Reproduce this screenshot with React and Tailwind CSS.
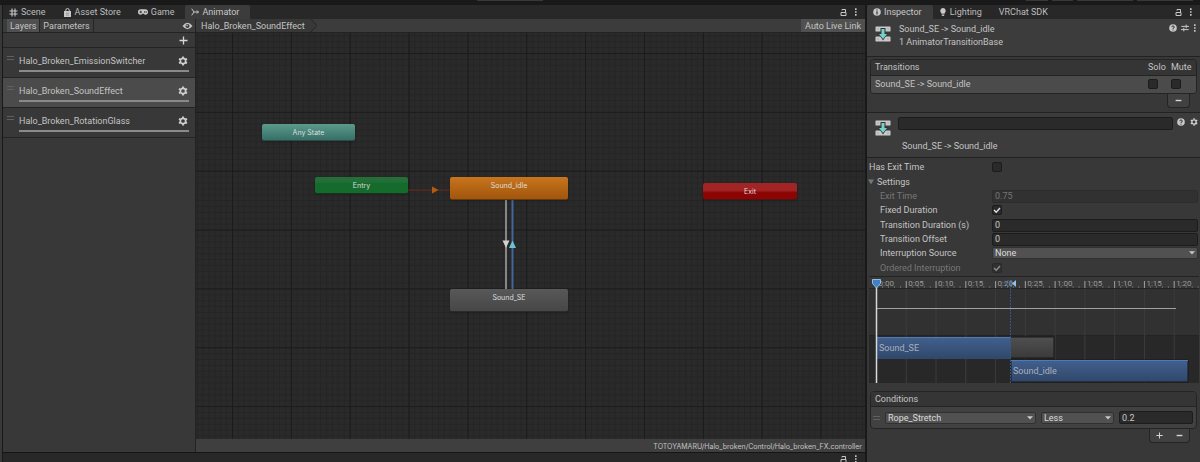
import React, { useState } from 'react';

const LAYERS = ['Halo_Broken_EmissionSwitcher', 'Halo_Broken_SoundEffect', 'Halo_Broken_RotationGlass'];

const TICKS = ['0:00', '0:05', '0:10', '0:15', '0:20', '0:25', '1:00', '1:05', '1:10', '1:15', '1:20'];
const TICK_GAP = 29.77;

// ==========================================
// Icons
// ==========================================
const HashIcon = () => (
    <svg className="size-[9px]" viewBox="0 0 9 9" stroke="#c8c8c8" strokeWidth="1.1" fill="none">
        <path d="M3 0.5V8.5M6 0.5V8.5M0.5 3H8.5M0.5 6H8.5" />
    </svg>
);

const BagIcon = () => (
    <svg className="size-[9px]" viewBox="0 0 9 9">
        <path d="M1 3H8V9H1Z" fill="#c8c8c8" />
        <path d="M2.8 4V2.2A1.7 1.7 0 0 1 6.2 2.2V4" fill="none" stroke="#c8c8c8" strokeWidth="1" />
        <path d="M3 5.2H6M3 7H6" stroke="#777" strokeWidth="0.6" />
    </svg>
);

const GamepadIcon = () => (
    <svg className="h-[8px] w-[10px]" viewBox="0 0 11 8">
        <path d="M3 1H8A3 3 0 0 1 8 7Q7 7 6.4 6H4.6Q4 7 3 7A3 3 0 0 1 3 1Z" fill="#c8c8c8" />
        <path d="M1.6 4H4.4M3 2.6V5.4" stroke="#282828" strokeWidth="0.9" />
        <circle cx="7.2" cy="4" r="0.7" fill="#282828" />
        <circle cx="9" cy="4" r="0.7" fill="#282828" />
    </svg>
);

const AnimatorIcon = () => (
    <svg className="size-[8px]" viewBox="0 0 8 8" fill="none" stroke="#c8c8c8" strokeWidth="1">
        <path d="M0.7 0.7L3 4L0.7 7.3M3 4H7.6M5.8 2.4L7.4 4L5.8 5.6" />
    </svg>
);

const InfoIcon = () => (
    <svg className="size-[8px]" viewBox="0 0 8 8">
        <circle cx="4" cy="4" r="3.8" fill="#c8c8c8" />
        <path d="M4 1.4V2.5M4 3.3V6.5" stroke="#333" strokeWidth="1.2" />
    </svg>
);

const BulbIcon = () => (
    <svg className="size-[8px]" viewBox="0 0 8 8" fill="#c8c8c8">
        <path d="M4 0A2.9 2.9 0 0 1 5.6 5.2V5.8H2.4V5.2A2.9 2.9 0 0 1 4 0Z" />
        <path d="M2.6 6.4H5.4V7.2L4.6 8H3.4L2.6 7.2Z" />
    </svg>
);

const LockIcon = () => (
    <svg className="h-[8px] w-[7px]" viewBox="0 0 7 8" fill="none" stroke="#c8c8c8" strokeWidth="1">
        <path d="M1 4.500H6V7.500H1ZM5.500 4V1.500H2V2.500" />
    </svg>
);

const DotsIcon = () => (
    <svg className="h-[8px] w-[4px]" viewBox="0 0 4 8" fill="#c8c8c8">
        <path d="M1 0.3H2.6V1.9H1ZM1 3.2H2.6V4.8H1ZM1 6.1H2.6V7.7H1Z" />
    </svg>
);

const EyeIcon = () => (
    <svg className="h-[8px] w-[11px]" viewBox="0 0 11 8">
        <path d="M0.5 4Q5.5 -2.4 10.5 4Q5.5 10.4 0.5 4Z" fill="#c4c4c4" />
        <circle cx="5.5" cy="4" r="2" fill="#3c3c3c" />
        <circle cx="5.1" cy="3.5" r="0.8" fill="#c4c4c4" />
    </svg>
);

const GearIcon = ({ className }) => (
    <svg className={className} viewBox="0 0 10 10" fill="none" stroke="#d0d0d0">
        <circle cx="5" cy="5" r="2.7" strokeWidth="1.7" />
        <path d="M5 0.4V2M5 8V9.6M1 2.7L2.4 3.5M7.6 6.5L9 7.3M1 7.3L2.4 6.5M7.6 3.5L9 2.7" strokeWidth="1.8" />
    </svg>
);

const HelpIcon = () => (
    <svg className="size-[8px]" viewBox="0 0 8 8">
        <circle cx="4" cy="4" r="3.8" fill="#c8c8c8" />
        <path d="M2.8 3.1A1.2 1.2 0 1 1 4 4.3V5M4 5.6V6.6" fill="none" stroke="#333" strokeWidth="1" />
    </svg>
);

const PresetIcon = () => (
    <svg className="size-[8px]" viewBox="0 0 8 8" fill="none" stroke="#c8c8c8" strokeWidth="1">
        <path d="M0.3 2.4H8M5.2 0.6V4.2M0 5.6H7.7M2.8 3.8V7.4" />
    </svg>
);

const TransitionIcon = () => (
    <svg className="size-[16px]" viewBox="0 0 16 16">
        <rect x="0.5" y="0.5" width="15" height="5" rx="0.6" fill="#c9c9c9" />
        <rect x="0.5" y="10.5" width="15" height="5" rx="0.6" fill="#c9c9c9" />
        <path d="M2.5 3H3.5M12.5 3H13.5M2.5 13H3.5M12.5 13H13.5" stroke="#888" strokeWidth="1" />
        <path d="M5.500 2H10.500V7H13L8 14.500L3 7H5.500Z" fill="#333" />
        <path d="M6.500 3H9.500V8H12L8 13L4 8H6.500Z" fill="#74d2ca" />
    </svg>
);

const PlusIcon = ({ className }) => (
    <svg className={className} viewBox="0 0 9 9" stroke="#d6d6d6" strokeWidth="1.3">
        <path d="M4.5 0.5V8.5M0.5 4.5H8.5" />
    </svg>
);

const MinusIcon = () => (
    <svg className="size-[7px]" viewBox="0 0 9 9" stroke="#d6d6d6" strokeWidth="1.8">
        <path d="M0.8 4.5H8.2" />
    </svg>
);

const Grip = () => (
    <svg className="h-[5px] w-[7px] shrink-0" viewBox="0 0 7 5" stroke="#606060" strokeWidth="1">
        <path d="M0 1.5H7M0 4.5H7" />
    </svg>
);

// ==========================================
// Controls
// ==========================================
const Tab = ({ icon, label, active }) => (
    <button className={`flex items-center gap-[3px] pl-[6px] pr-[11px] text-[9px] leading-[14px] ${active ? 'bg-[#3c3c3c] text-[#c8c8c8] rounded-t-xs' : 'text-[#bdbdbd]'}`}>
        {icon}
        <span>{label}</span>
    </button>
);

const WindowButtons = () => (
    <div className="ml-auto flex items-center gap-[7px] pr-[7px]">
        <button aria-label="Lock"><LockIcon /></button>
        <button aria-label="Menu"><DotsIcon /></button>
    </div>
);

const Checkbox = ({ id, label, defaultChecked, disabled }) => (
    <span className={`grid size-[10px] ${disabled ? 'opacity-50' : ''}`}>
        <input id={id} aria-label={label} type="checkbox" defaultChecked={defaultChecked} disabled={disabled}
            className="peer col-start-1 row-start-1 size-[10px] appearance-none rounded-xs border border-[#1c1c1c] bg-[#2a2a2a]" />
        <svg className="pointer-events-none col-start-1 row-start-1 size-[10px] opacity-0 peer-checked:opacity-100" viewBox="0 0 10 10" fill="none" stroke="#e0e0e0" strokeWidth="1.4">
            <path d="M2 5L4.2 7.2L8 3" />
        </svg>
    </span>
);

const TextField = ({ id, label, value, disabled, className = '' }) => (
    <input id={id} aria-label={label} type="text" defaultValue={value} disabled={disabled}
        className={`h-[13px] min-w-0 rounded-xs border px-[2px] text-[9px] leading-[11px] ${disabled ? 'border-[#2c2c2c] bg-[#313131] text-[#757575]' : 'border-[#1c1c1c] bg-[#2a2a2a] text-[#c8c8c8]'} ${className}`} />
);

const Dropdown = ({ id, label, value, className = '' }) => (
    <span className={`grid min-w-0 items-center ${className}`}>
        <select id={id} aria-label={label} defaultValue={value}
            className="col-start-1 row-start-1 h-[12px] w-full appearance-none rounded-xs border border-[#303030] bg-[#515151] px-[2px] text-[9px] leading-[10px] text-[#dcdcdc]">
            <option>{value}</option>
        </select>
        <svg className="pointer-events-none col-start-1 row-start-1 mr-[3px] h-[4px] w-[6px] justify-self-end" viewBox="0 0 6 4" fill="#c8c8c8">
            <path d="M0 0.3H6L3 3.6Z" />
        </svg>
    </span>
);

const Field = ({ id, label, children, indent = true, dim, className = '' }) => (
    <div className={`flex h-[14px] items-center pr-[2px] ${className}`}>
        <label htmlFor={id} className={`w-[125px] shrink-0 ${indent ? 'pl-[13px]' : 'pl-[2px]'} ${dim ? 'text-[#777]' : ''}`}>{label}</label>
        {children}
    </div>
);

// ==========================================
// Animator: layer list
// ==========================================
const LayerPanel = () => {
    const [selected, setSelected] = useState(1);

    return (
        <div className="flex w-[193px] shrink-0 flex-col border-r border-[#232323]">
            <div className="flex h-[14px] items-stretch border-b border-[#232323] bg-[#3c3c3c] pl-[4px]">
                <button className="bg-[#505050] px-[3px]">Layers</button>
                <button className="border-x border-[#262626] px-[3px]">Parameters</button>
                <button className="ml-auto pr-[2px]" aria-label="Toggle panel"><EyeIcon /></button>
            </div>
            <div className="flex h-[15px] items-center justify-end border-b border-[#232323] pr-[7px]">
                <button aria-label="Add layer"><PlusIcon className="size-[9px]" /></button>
            </div>
            {LAYERS.map((name, i) => (
                <div key={name} onClick={() => setSelected(i)}
                    className={`flex h-[30px] items-start border-b border-[#242424] pt-[7px] pl-[4px] ${selected === i ? 'bg-[#4b4b4b]' : 'bg-[#383838]'}`}>
                    <Grip />
                    <div className="ml-[5px] mr-[6px] flex-1">
                        <div className="flex items-center justify-between pr-px">
                            <span className="leading-[12px]">{name}</span>
                            <button aria-label="Layer settings"><GearIcon className="size-[10px]" /></button>
                        </div>
                        <div className="mt-[3px] h-[2px] bg-[#8a8a8a]"></div>
                    </div>
                </div>
            ))}
        </div>
    );
};

// ==========================================
// Animator: state graph
// ==========================================
const StateNode = ({ label, className }) => (
    <div className={`absolute flex justify-center rounded-xs border-b border-black/50 font-['Inter','Liberation_Sans',sans-serif] text-[7px] text-[#dedede] shadow ${className}`}>{label}</div>
);

const Graph = () => (
    <div className="relative min-h-0 flex-1 overflow-hidden bg-[#2a2a2a]">
        <svg className="absolute inset-0 size-full">
            <defs>
                <pattern id="minor" x="36" y="20" width="5.885" height="5.885" patternUnits="userSpaceOnUse">
                    <path d="M0.5 0V5.885M0 0.5H5.885" stroke="#242424" strokeWidth="0.9" />
                </pattern>
                <pattern id="major" x="36" y="20" width="58.85" height="58.85" patternUnits="userSpaceOnUse">
                    <path d="M0.5 0V58.85M0 0.5H58.85" stroke="#1b1b1b" strokeWidth="1" />
                </pattern>
            </defs>
            <rect width="100%" height="100%" fill="url(#minor)" />
            <rect width="100%" height="100%" fill="url(#major)" />
            <path d="M212 157H255" stroke="#6b2a1a" strokeWidth="1" />
            <path d="M236 153.5L242.5 157L236 160.5Z" fill="#b35c10" />
            <path d="M310 166V256" stroke="#868686" strokeWidth="2" />
            <path d="M316.5 166V256" stroke="#3f6798" strokeWidth="2" />
            <path d="M306.5 207.500H313.500L310 215Z" fill="#d0d0d0" />
            <path d="M313 215H320L316.500 207.500Z" fill="#6fc0d0" />
        </svg>
        <StateNode label="Any State" className="top-[91px] left-[66px] h-[17px] w-[93px] bg-linear-to-b from-[#5a9c8b] to-[#376f68] leading-[18px]" />
        <StateNode label="Entry" className="top-[144px] left-[119px] h-[17px] w-[93px] bg-linear-to-b from-[#246f38] from-30% to-[#156b2c] to-40% leading-[18px]" />
        <StateNode label="Exit" className="top-[150px] left-[507px] h-[17px] w-[94px] bg-linear-to-b from-[#a32424] from-45% to-[#8b0505] to-60% leading-[18px]" />
        <StateNode label="Sound_idle" className="top-[144px] left-[254px] h-[23px] w-[118px] bg-linear-to-b from-[#c8751d] to-[#a1560c] leading-[18px]" />
        <StateNode label="Sound_SE" className="top-[256px] left-[254px] h-[23px] w-[118px] bg-linear-to-b from-[#585858] to-[#474747] leading-[18px]" />
    </div>
);

const GraphPanel = () => (
    <div className="flex min-w-0 flex-1 flex-col">
        <div className="flex h-[14px] items-stretch border-b border-[#232323] bg-[#3c3c3c]">
            <span className="bg-[#383838] pl-[5px]">Halo_Broken_SoundEffect</span>
            <svg className="h-[13px] w-[12px]" viewBox="0 0 12 13">
                <path d="M0 0H6L12 6.5L6 13H0Z" fill="#383838" />
                <path d="M6 0L12 6.5L6 13" fill="none" stroke="#262626" />
            </svg>
            <button className="ml-auto bg-[#505050] px-[4px]">Auto Live Link</button>
        </div>
        <Graph />
        <div className="h-[13px] bg-[#3f3f3f] pr-[3px] text-right font-['Inter','Liberation_Sans',sans-serif] text-[7px] leading-[15px]">TOTOYAMARU/Halo_broken/Control/Halo_broken_FX.controller</div>
    </div>
);

// ==========================================
// Inspector
// ==========================================
const TransitionsList = () => (
    <section className="mx-[3px] mt-[2px]">
        <div className="overflow-hidden rounded-sm border border-[#242424]">
            <table className="w-full table-fixed text-left">
                <thead>
                    <tr className="h-[15px] border-b border-[#242424] bg-[#353535]">
                        <th className="pl-[4px] font-normal">Transitions</th>
                        <th className="w-[23px] font-normal">Solo</th>
                        <th className="w-[25px] font-normal">Mute</th>
                    </tr>
                </thead>
                <tbody>
                    <tr className="h-[18px] bg-[#4b4b4b]">
                        <td className="pl-[4px]">Sound_SE -&gt; Sound_idle</td>
                        <td><Checkbox label="Solo" /></td>
                        <td><Checkbox label="Mute" /></td>
                    </tr>
                </tbody>
            </table>
        </div>
        <div className="mr-[7px] ml-auto flex h-[14px] w-[23px] items-center justify-center rounded-b-sm border border-t-0 border-[#242424] bg-[#414141]">
            <button aria-label="Remove transition"><MinusIcon /></button>
        </div>
    </section>
);

const Timeline = () => (
    <svg className="mx-[2px] mt-px h-[107px] w-[330px]">
        <defs>
            <linearGradient id="clip" x1="0" y1="0" x2="0" y2="1">
                <stop offset="0" stopColor="#42618f" />
                <stop offset="1" stopColor="#30476a" />
            </linearGradient>
            <linearGradient id="rest" x1="0" y1="0" x2="0" y2="1">
                <stop offset="0" stopColor="#505050" />
                <stop offset="1" stopColor="#3a3a3a" />
            </linearGradient>
        </defs>
        <rect width="100%" height="12" fill="#383838" />
        <rect y="12" width="100%" height="47" fill="#313131" />
        <rect y="59" width="100%" height="48" fill="#282828" />
        <path d="M0 0.5H330M0 12.5H330M0 59.5H330" stroke="#232323" />
        {TICKS.map((label, i) => {
            const x = 7.5 + i * TICK_GAP;
            return (
                <g key={label}>
                    <path d={`M${x} 13V107`} stroke="#3c3c3c" />
                    <path d={`M${x} 5V12`} stroke="#a0a0a0" />
                    <path d={`M${x + 6} 10V12M${x + 12} 10V12M${x + 18} 10V12M${x + 24} 10V12`} stroke="#666" />
                    <text x={x + 2} y="10" fontSize="8" fill="#9b9b9b">{label}</text>
                </g>
            );
        })}
        <path d="M7 32.500H307" stroke="#a0a0a0" />
        <rect x="141" y="61" width="44" height="21" fill="url(#rest)" stroke="#181818" />
        <rect x="8" y="61" width="134" height="22" fill="url(#clip)" />
        <path d="M8 61.500H142" stroke="#5079b5" />
        <rect x="142" y="84" width="177" height="22" fill="url(#clip)" stroke="#181818" />
        <path d="M142 84.500H319" stroke="#5079b5" />
        <text x="10" y="75" fontSize="9" fill="#a9b0ba">Sound_SE</text>
        <text x="144" y="98" fontSize="9" fill="#a9b0ba">Sound_idle</text>
        <path d="M141.500 12V107" stroke="#35567f" strokeDasharray="2 1" />
        <path d="M139.500 4L136 7.500L139.500 11" fill="none" stroke="#3f76b5" />
        <path d="M142 4V11" stroke="#4f8fd0" />
        <path d="M147 4L143 7.500L147 11Z" fill="#8cc4ee" />
        <path d="M7.500 11V107" stroke="#d8d8d8" strokeWidth="1.5" />
        <path d="M3.500 3.500H11.500V7.500L7.500 12L3.500 7.500Z" fill="#3f80c8" stroke="#a8d4ee" strokeWidth="0.8" />
    </svg>
);

const Conditions = () => (
    <section className="mx-[3px] mt-[8px]">
        <div className="overflow-hidden rounded-sm border border-[#242424] bg-[#414141]">
            <h3 className="h-[15px] border-b border-[#242424] bg-[#353535] pl-[4px] leading-[14px]">Conditions</h3>
            <div className="flex h-[21px] items-center gap-[5px] pr-[3px] pl-[2px]">
                <Grip />
                <Dropdown label="Parameter" value="Rope_Stretch" className="flex-1" />
                <Dropdown label="Mode" value="Less" className="w-[73px]" />
                <TextField label="Threshold" value="0.2" className="w-[74px]" />
            </div>
        </div>
        <div className="mr-[7px] ml-auto flex h-[14px] w-[41px] items-center justify-around rounded-b-sm border border-t-0 border-[#242424] bg-[#414141]">
            <button aria-label="Add condition"><PlusIcon className="size-[7px]" /></button>
            <button aria-label="Remove condition"><MinusIcon /></button>
        </div>
    </section>
);

const Inspector = () => (
    <aside className="flex w-[333px] shrink-0 flex-col bg-[#383838]">
        <div className="flex h-[14px] bg-[#282828]">
            <Tab icon={<InfoIcon />} label="Inspector" active />
            <Tab icon={<BulbIcon />} label="Lighting" />
            <Tab label="VRChat SDK" />
            <WindowButtons />
        </div>
        <header className="flex h-[38px] items-start border-b border-[#222] bg-[#3c3c3c] pt-[4px] pl-[8px]">
            <div className="pt-[3px]"><TransitionIcon /></div>
            <div className="ml-[8px] leading-[13px]">
                <div>Sound_SE -&gt; Sound_idle</div>
                <div>1 AnimatorTransitionBase</div>
            </div>
            <div className="ml-auto flex gap-[4px] pt-px pr-[3px]">
                <button aria-label="Help"><HelpIcon /></button>
                <button aria-label="Presets"><PresetIcon /></button>
                <button aria-label="Menu"><DotsIcon /></button>
            </div>
        </header>
        <TransitionsList />
        <header className="mt-[4px] flex h-[46px] items-start border-y border-[#222] bg-[#3c3c3c] pt-[4px] pl-[8px]">
            <div className="pt-[3px]"><TransitionIcon /></div>
            <div className="ml-[7px] flex-1">
                <TextField label="Transition name" value="" className="block w-full" />
                <div className="mt-[10px] pl-[4px] leading-[13px]">Sound_SE -&gt; Sound_idle</div>
            </div>
            <div className="ml-[4px] flex gap-[5px] pt-px pr-[2px]">
                <button aria-label="Help"><HelpIcon /></button>
                <button aria-label="Settings"><GearIcon className="size-[8px]" /></button>
            </div>
        </header>
        <div className="pt-[2px]">
            <Field id="hasExit" label="Has Exit Time" indent={false}><Checkbox id="hasExit" /></Field>
            <button className="mt-px flex h-[14px] items-center gap-[3px] pl-px">
                <svg className="size-[6px]" viewBox="0 0 6 6" fill="#777"><path d="M0 0.5H6L3 5.5Z" /></svg>
                Settings
            </button>
            <Field id="exitTime" label="Exit Time" dim><TextField id="exitTime" value="0.75" disabled className="flex-1" /></Field>
            <Field id="fixed" label="Fixed Duration"><Checkbox id="fixed" defaultChecked /></Field>
            <Field id="duration" label="Transition Duration (s)" className="mt-px"><TextField id="duration" value="0" className="flex-1" /></Field>
            <Field id="offset" label="Transition Offset"><TextField id="offset" value="0" className="flex-1" /></Field>
            <Field id="source" label="Interruption Source"><Dropdown id="source" value="None" className="flex-1" /></Field>
            <Field id="ordered" label="Ordered Interruption" dim className="mt-px"><Checkbox id="ordered" defaultChecked disabled /></Field>
        </div>
        <Timeline />
        <Conditions />
    </aside>
);

export default function App() {
    return (
        <div className="flex h-screen flex-col overflow-hidden bg-[#191919] font-['Roboto','Liberation_Sans',sans-serif] text-[9px] leading-[14px] text-[#c4c4c4]">
            {/* lower edge of the main toolbar */}
            <div className="flex h-[5px] shrink-0 items-start gap-[4px] pr-[7px]">
                <div className="ml-[40%] h-px w-[66px] bg-[#383838]"></div>
                <div className="ml-auto h-px w-[22px] bg-[#383838]"></div>
                <div className="h-px w-[21px] bg-[#383838]"></div>
                <div className="h-px w-[56px] bg-[#383838]"></div>
                <div className="h-px w-[56px] bg-[#383838]"></div>
            </div>
            <div className="flex min-h-0 flex-1">
                <div className="mr-px w-[2px] shrink-0 bg-[#383838]"></div>
                <main className="mr-[2px] flex min-w-0 flex-1 flex-col bg-[#383838]">
                    <div className="flex h-[14px] shrink-0 bg-[#282828]">
                        <Tab icon={<HashIcon />} label="Scene" />
                        <Tab icon={<BagIcon />} label="Asset Store" />
                        <Tab icon={<GamepadIcon />} label="Game" />
                        <Tab icon={<AnimatorIcon />} label="Animator" active />
                        <WindowButtons />
                    </div>
                    <div className="flex min-h-0 flex-1">
                        <LayerPanel />
                        <GraphPanel />
                    </div>
                    <div className="flex h-[10px] shrink-0 overflow-hidden border-t border-[#151515] bg-[#282828] pt-[3px]">
                        <WindowButtons />
                    </div>
                </main>
                <Inspector />
            </div>
        </div>
    );
}
